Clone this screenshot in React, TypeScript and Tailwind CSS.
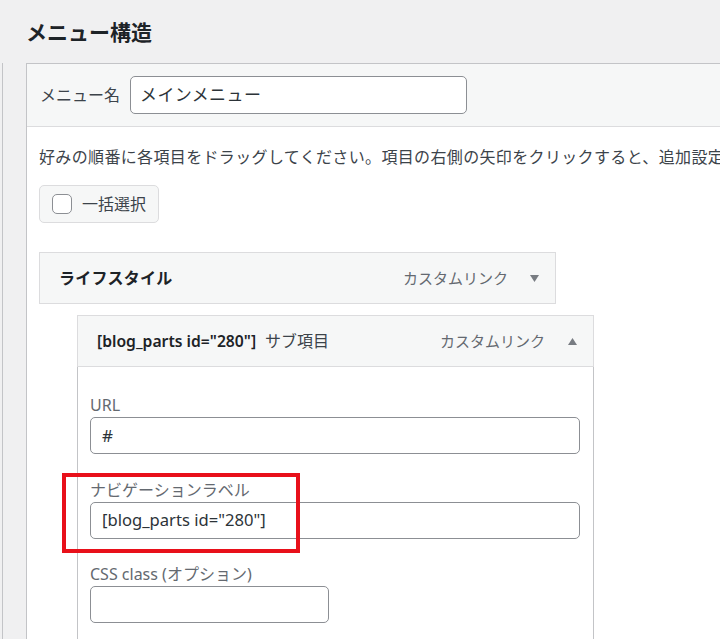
import React from "react";

const font = { fontFamily: '"Noto Sans", "Noto Sans CJK JP", sans-serif' };

function Tri({ up }: { up?: boolean }) {
  return (
    <svg width="9" height="7" viewBox="0 0 9 7" className="shrink-0">
      {up ? (
        <polygon points="0,7 9,7 4.5,0" fill="#787c82" />
      ) : (
        <polygon points="0,0 9,0 4.5,7" fill="#787c82" />
      )}
    </svg>
  );
}

export default function App() {
  return (
    <div
      className="w-[720px] h-[639px] bg-[#f0f0f1] overflow-hidden flex"
      style={font}
    >
      <div className="w-[3px] shrink-0 pt-[63px]">
        <div className="h-full border-r border-[#c3c4c7]" />
      </div>
      <div className="ml-[23px] flex-1 min-w-0 flex flex-col">
        <div className="h-[63px] shrink-0 flex items-center">
          <h2 className="text-[21px] font-bold text-[#1d2327] leading-[28px] mt-[1px]">
            メニュー構造
          </h2>
        </div>
        <div className="w-[760px] shrink-0 flex-1 border-l border-t border-[#c3c4c7] bg-white">
          <div className="h-[63px] bg-[#f6f7f7] border-b border-[#dcdcde] flex items-center pl-[13px]">
            <span className="text-[16px] text-[#3c434a] mr-[10px]">メニュー名</span>
            <div className="w-[337px] h-[38px] bg-white border border-[#8c8f94] rounded-[5px] flex items-center pl-[9px] text-[17px] tracking-[0.4px] text-[#2c3338]">
              メインメニュー
            </div>
          </div>
          <div className="pl-[12px]">
            <p className="pt-[18px] text-[16px] leading-[24px] tracking-[0.35px] text-[#3c434a] whitespace-nowrap">
              好みの順番に各項目をドラッグしてください。項目の右側の矢印をクリックすると、追加設定
            </p>
            <div className="mt-[16px] w-[120px] h-[38px] bg-[#f6f7f7] border border-[#dcdcde] rounded-[5px] flex items-center pl-[12px]">
              <span className="w-[20px] h-[20px] bg-white border border-[#8c8f94] rounded-[5px] shrink-0" />
              <span className="ml-[10px] text-[16px] text-[#3c434a]">一括選択</span>
            </div>
            <div className="mt-[29px] w-[517px] h-[52px] bg-[#f6f7f7] border border-[#dcdcde] flex items-center pl-[19px] pr-[16px]">
              <span className="flex-1 text-[16px] font-bold text-[#1d2327] tracking-[0.2px]">ライフスタイル</span>
              <span className="text-[15px] text-[#646970] mr-[22px]">カスタムリンク</span>
              <Tri />
            </div>
            <div className="mt-[11px] ml-[38px] w-[517px]">
              <div className="h-[52px] bg-[#f6f7f7] border border-[#dcdcde] flex items-center pl-[19px] pr-[16px]">
                <span className="flex-1 text-[15.7px] text-[#1d2327] whitespace-nowrap">
                  <span className="font-semibold">[blog_parts id="280"]</span>
                  <span className="ml-[9px] text-[16px] text-[#3c434a]">サブ項目</span>
                </span>
                <span className="text-[15px] text-[#646970] mr-[23px]">カスタムリンク</span>
                <Tri up />
              </div>
              <div className="relative border-l border-r border-[#c3c4c7] h-[300px] pl-[12px] pr-[13px] pt-[27px]">
                <div className="h-[23px] leading-[23px] text-[16px] text-[#646970]">URL</div>
                <div className="h-[37px] bg-white border border-[#8c8f94] rounded-[5px] flex items-center pl-[11px] text-[17px] text-[#2c3338]">
                  #
                </div>
                <div className="mt-[25px] h-[23px] leading-[23px] text-[16px] text-[#646970]">
                  ナビゲーションラベル
                </div>
                <div className="h-[37px] bg-white border border-[#8c8f94] rounded-[5px] flex items-center pl-[11px] text-[16.6px] text-[#2c3338]">
                  [blog_parts id="280"]
                </div>
                <div className="mt-[24px] h-[23px] leading-[23px] text-[16px] text-[#646970]">
                  CSS class (オプション)
                </div>
                <div className="w-[239px] h-[37px] bg-white border border-[#8c8f94] rounded-[5px]" />
                <div className="absolute left-[-16px] top-[106px] w-[238px] h-[80px] border-[4px] border-[#e8101a]" />
              </div>
            </div>
          </div>
        </div>
      </div>
    </div>
  );
}
